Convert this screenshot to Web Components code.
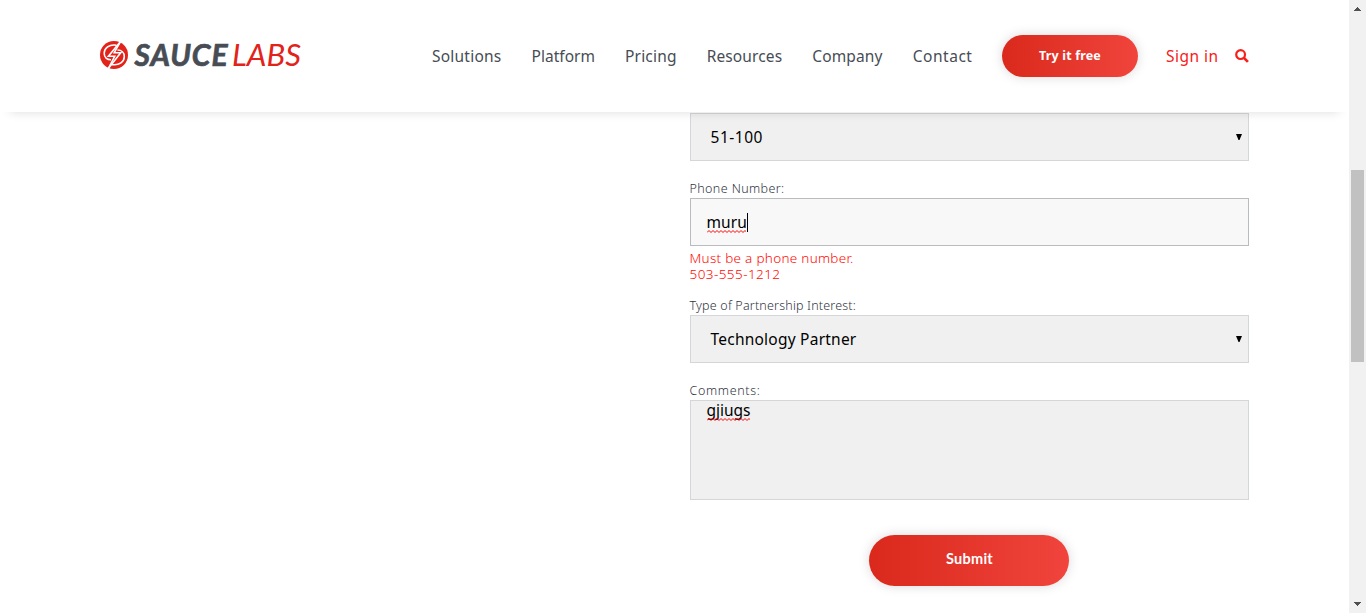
<!DOCTYPE html>
<html lang="en">
<head>
<meta charset="utf-8">
<title>Sauce Labs</title>
<style>
html,body{margin:0;height:100%;overflow:hidden;background:#fff}
body{font-family:"Noto Sans","Liberation Sans",sans-serif;color:#474c55}
</style>
</head>
<body>
<partner-page></partner-page>
<script>
const define = (name, html, setup) => {
  const t = document.createElement('template');
  t.innerHTML = html;
  customElements.define(name, class extends HTMLElement {
    connectedCallback() {
      if (this.shadowRoot) return;
      this.attachShadow({mode: 'open'}).append(t.content.cloneNode(true));
      if (setup) setup(this, this.shadowRoot);
    }
  });
};

// A run of text tracked to occupy a given advance width.
define('tracked-text', `<style>:host{display:inline-block;white-space:nowrap}</style><span><slot></slot></span>`, (el, root) => {
  const w = +el.getAttribute('width');
  const natural = root.querySelector('span').getBoundingClientRect().width;
  el.style.letterSpacing = (w - natural) / el.textContent.length + 'px';
  el.style.width = w + 'px';
});

define('sauce-logo', `<style>:host{display:block;width:202px;height:32px}svg{display:block;overflow:visible}</style>
<svg width="202" height="40" viewBox="0 -4 202 40" style="margin-top:-4px">
  <circle cx="14" cy="16" r="14" fill="#e2231a"/>
  <g fill="none" stroke="#fff" stroke-width="1.6" stroke-linejoin="miter">
    <path d="M20.500 2.500L8.400 17.300h6.300L8.300 29.500"/>
    <path d="M20.500 2.500L14.200 13.700h6.500L8.300 29.500"/>
    <path d="M16.500 6.200C9 5 4.200 9.400 4.200 14.300c0 4 2.800 6.500 6.800 6.500"/>
    <path d="M12 25.600c7.500 1.200 12.300-3.200 12.300-8.100 0-4-2.800-6.500-6.800-6.500"/>
  </g>
  <text x="34.500" y="26.700" font-family="Lato" font-size="30" font-weight="700" font-style="italic" fill="#474c55" stroke="#474c55" stroke-width=".7" textLength="93">SAUCE</text>
  <text x="132" y="26.700" font-family="Lato" font-size="30.500" font-weight="400" font-style="italic" fill="#e2231a" textLength="69" lengthAdjust="spacingAndGlyphs">LABS</text>
</svg>`);

define('pill-button', `<style>
:host{display:flex;align-items:center;justify-content:center;box-sizing:border-box;border-radius:26px;color:#fff;font-weight:700;background:linear-gradient(90deg,#da291c,#f0443c);box-shadow:0 0 12px rgba(0,0,0,.15)}
</style><slot></slot>`);

define('search-icon', `<style>:host{display:block;width:14px;height:14px}svg{display:block}</style>
<svg width="14" height="14" viewBox="0 0 14 14" fill="none" stroke="#f8201a"><circle cx="5.600" cy="5.600" r="4.400" stroke-width="2.200"/><path d="M8.900 8.900l4 4" stroke-width="2.700"/></svg>`);

define('site-header', `<style>
:host{display:flex;align-items:center;box-sizing:border-box;width:1349px;height:112px;padding-left:99.500px;background:#fff;box-shadow:0 10px 10px -10px rgba(0,0,0,.14);position:relative;z-index:2}
sauce-logo{margin-top:-2px;flex:none}
nav{display:flex;gap:30px;margin-left:130.500px;font-size:15.500px;line-height:20px;flex:none;margin-top:-1px}
pill-button{width:136px;height:42px;margin-left:29.500px;font:700 12.500px "Noto Sans",sans-serif;flex:none;padding-bottom:1px}
.in{margin-left:28px;font-size:15.500px;line-height:20px;color:#f8201a;margin-top:-1px}
search-icon{margin-left:16.500px}
</style>
<sauce-logo></sauce-logo>
<nav>
<tracked-text width="69.500">Solutions</tracked-text>
<tracked-text width="63.500">Platform</tracked-text>
<tracked-text width="51.700">Pricing</tracked-text>
<tracked-text width="75.500">Resources</tracked-text>
<tracked-text width="70.500">Company</tracked-text>
<tracked-text width="59.800">Contact</tracked-text>
</nav>
<pill-button><tracked-text width="62">Try it free</tracked-text></pill-button>
<tracked-text class="in" width="52.500">Sign in</tracked-text>
<search-icon></search-icon>`);

define('select-box', `<style>
:host{display:flex;align-items:center;justify-content:space-between;box-sizing:border-box;height:48px;border:1px solid #d5d6d7;background:#f0f0f0;padding:0 6px 0 19.500px;color:#000;font-size:15.500px;line-height:20px}
svg{display:block;margin-top:-1px}
</style><slot></slot><svg width="6" height="6" viewBox="0 0 6 6"><path d="M0 0h6L3.500 6h-1z"/></svg>`);

define('misspelled-word', `<style>
:host{display:inline-block;position:relative}
svg{position:absolute;left:0;bottom:-1px;overflow:hidden}
</style><slot></slot><svg height="3"><path fill="none" stroke="#f00" stroke-width="1"/></svg>`, (el, root) => {
  const w = +el.getAttribute('width');
  root.querySelector('svg').setAttribute('width', w);
  let d = 'M0 2.500';
  for (let x = 2; x < w + 4; x += 2) d += `L${x} ${x % 4 ? .5 : 2.5}`;
  root.querySelector('path').setAttribute('d', d);
});

define('text-box', `<style>
:host{display:flex;align-items:center;box-sizing:border-box;height:48px;border:1px solid #babbbf;background:#f8f8f8;padding:0 15.500px 0;color:#000;font-size:15.500px;line-height:20px}
:host([multiline]){height:100px;align-items:flex-start;background:#f0f0f0;border-color:#d5d6d7}
:host([multiline]) ::slotted(*){margin-top:-1px}
i{width:1px;height:19px;background:#000}
:host([multiline]) i{display:none}
</style><slot></slot><i></i>`);

define('field-label', `<style>:host{display:block;font-size:12.500px;font-weight:300;line-height:18px;height:18px;color:#30353f}</style><slot></slot>`);

define('partner-form', `<style>
:host{display:flex;flex-direction:column;width:559px;margin-left:690px;padding-top:1px}
field-label{margin:19px 0 0 -.5px}
.error{color:#ff0800;font-size:13.500px;font-weight:300;line-height:16px;margin:4px 0 0 -.5px;height:32px;display:flex;flex-direction:column;align-items:flex-start}
.error+field-label{margin-top:15px}
pill-button{width:200px;height:51px;margin:35px 0 0 179px;font:700 14.500px Lato,sans-serif;padding:0 0 4px 1px}
</style>
<select-box><tracked-text width="52.500">51-100</tracked-text></select-box>
<field-label><tracked-text width="95">Phone Number:</tracked-text></field-label>
<text-box><misspelled-word width="39"><tracked-text width="40.500">muru</tracked-text></misspelled-word></text-box>
<div class="error"><tracked-text width="164">Must be a phone number.</tracked-text><tracked-text width="91">503-555-1212</tracked-text></div>
<field-label><tracked-text width="166.500">Type of Partnership Interest:</tracked-text></field-label>
<select-box><tracked-text width="146">Technology Partner</tracked-text></select-box>
<field-label><tracked-text width="71">Comments:</tracked-text></field-label>
<text-box multiline><misspelled-word width="43"><tracked-text width="44">gjiugs</tracked-text></misspelled-word></text-box>
<pill-button><tracked-text width="47">Submit</tracked-text></pill-button>`);

define('page-scrollbar', `<style>
:host{display:flex;flex-direction:column;align-items:center;box-sizing:border-box;width:17px;height:613px;background:#f1f1f1;padding:7px 0;flex:none}
.thumb{width:13px;height:192px;background:#c1c1c1;margin:159px 0 auto}
svg{display:block}
</style>
<svg width="7" height="4" shape-rendering="crispEdges" fill="#505050"><path d="M3 0h1v1h1v1h1v1h1v1H0V3h1V2h1V1h1z"/></svg>
<div class="thumb"></div>
<svg width="7" height="4" shape-rendering="crispEdges" fill="#505050"><path d="M0 0h7v1H6v1H5v1H4v1H3V3H2V2H1V1H0z"/></svg>`);

define('partner-page', `<style>
:host{display:flex;width:1366px;height:613px;overflow:hidden}
main{width:1349px;flex:none;overflow:hidden}
</style><main><site-header></site-header><partner-form></partner-form></main><page-scrollbar></page-scrollbar>`);
</script>
</body>
</html>
